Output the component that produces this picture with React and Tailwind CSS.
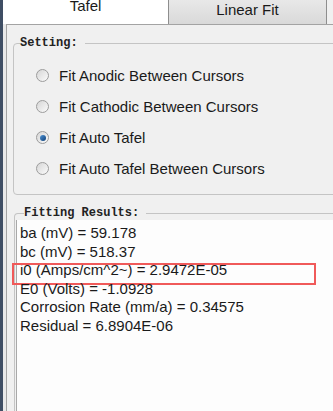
import React from 'react';

const options = [
    { label: 'Fit Anodic Between Cursors', checked: false },
    { label: 'Fit Cathodic Between Cursors', checked: false },
    { label: 'Fit Auto Tafel', checked: true },
    { label: 'Fit Auto Tafel Between Cursors', checked: false },
];

const results = [
    'ba (mV) = 59.178',
    'bc (mV) = 518.37',
    'i0 (Amps/cm^2~) = 2.9472E-05',
    'E0 (Volts) = -1.0928',
    'Corrosion Rate (mm/a) = 0.34575',
    'Residual = 6.8904E-06',
];

const Radio = ({ checked }) => (
    <div className="w-[13px] h-[13px] rounded-full border border-[#9c9c9c] bg-gradient-to-br from-[#d6d6d6] to-[#fbfbfb] flex items-center justify-center shrink-0">
        {checked && (
            <div className="w-[6px] h-[6px] rounded-full bg-gradient-to-br from-[#4f93d4] to-[#0d3f78]" />
        )}
    </div>
);

export default function App() {
    return (
        <div className="w-[333px] h-[411px] overflow-hidden flex bg-[#f0f0f0] font-['Liberation_Sans',Arial,sans-serif] text-[15px] text-[#1a1a1a]">
            {/* window edge */}
            <div className="w-[3px] shrink-0 bg-[#3f4e64]" />

            <div className="flex-1 flex flex-col min-w-0">
                {/* tabs */}
                <div className="h-[24px] flex shrink-0">
                    <div className="w-[165px] bg-white flex justify-center">
                        <span className="leading-[11px]">Tafel</span>
                    </div>
                    <div className="w-[159px] border-l border-r border-[#8e8e8e] bg-gradient-to-b from-[#e8e8e8] to-[#d9d9d9] flex justify-center pt-[4px]">
                        <span className="leading-[11px]">Linear Fit</span>
                    </div>
                    <div className="flex-1 bg-[#f0f0f0]" />
                </div>

                <div className="flex-1 flex">
                    <div className="w-[3px] shrink-0 bg-[#e9e9e9]" />

                    {/* tab panel */}
                    <div className="flex-1 border-t border-l border-[#a3a3a3] bg-[#f0f0f0] flex flex-col">
                        <fieldset className="ml-[6px] mt-[11px] w-[340px] border border-[#c4c4c4] rounded-[4px]">
                            <legend className="ml-[6px] pr-[7px] font-['Liberation_Mono',monospace] font-bold text-[12px] leading-[14px] text-[#222]">
                                Setting:
                            </legend>
                            <div className="pl-[22px] pt-[10px] pb-[10px]">
                                {options.map(opt => (
                                    <div key={opt.label} className="h-[31px] flex items-center">
                                        <Radio checked={opt.checked} />
                                        <span className="ml-[10px] leading-[18px]">{opt.label}</span>
                                    </div>
                                ))}
                            </div>
                        </fieldset>

                        <fieldset className="ml-[7px] mt-[11px] w-[340px] flex-1 border border-b-0 border-[#c4c4c4] rounded-t-[4px] flex flex-col">
                            <legend className="ml-[9px] pr-[7px] font-['Liberation_Mono',monospace] font-bold text-[12px] leading-[14px] text-[#222]">
                                Fitting Results:
                            </legend>
                            <div className="ml-[1px] flex-1 border-l border-[#a9a9a9] bg-[#fdfdfd] pt-[4px] pl-[3px] h-[200px]">
                                {results.map((line, i) => (
                                    <div key={line} className="relative leading-[18.6px] whitespace-nowrap">
                                        {line}
                                        {i === 2 && (
                                            <div className="absolute -left-[8px] top-[2px] w-[304px] h-[22px] border-2 border-[#f05a5a]" />
                                        )}
                                    </div>
                                ))}
                            </div>
                        </fieldset>
                    </div>
                </div>
            </div>
        </div>
    );
}
